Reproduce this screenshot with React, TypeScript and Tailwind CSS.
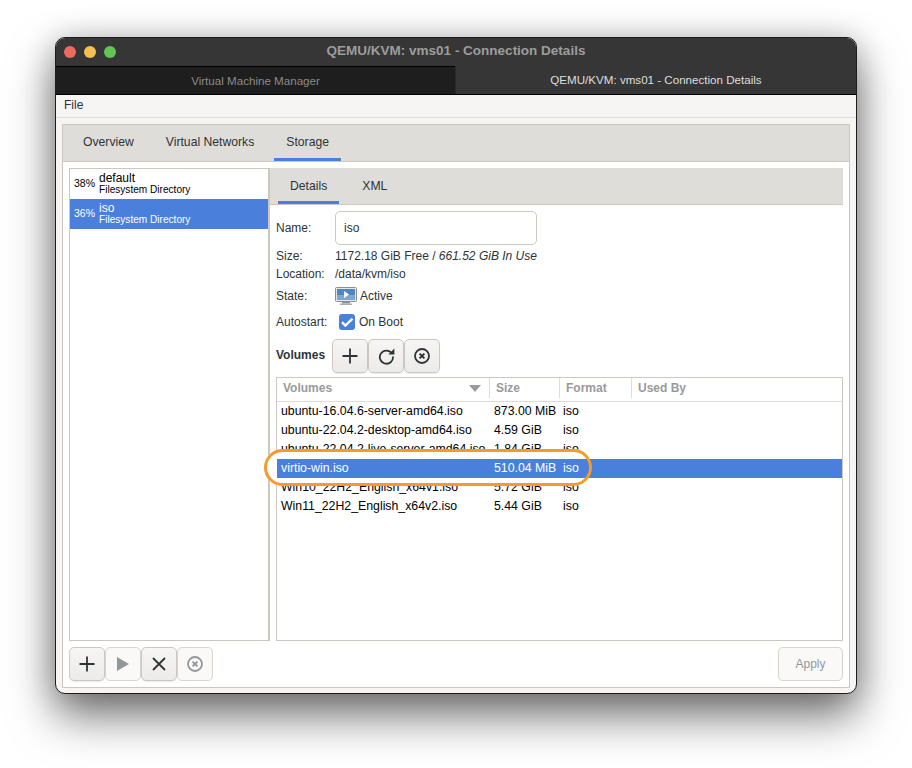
import React from "react";

const volumes = [
  { name: "ubuntu-16.04.6-server-amd64.iso", size: "873.00 MiB", format: "iso" },
  { name: "ubuntu-22.04.2-desktop-amd64.iso", size: "4.59 GiB", format: "iso" },
  { name: "ubuntu-22.04.2-live-server-amd64.iso", size: "1.84 GiB", format: "iso" },
  { name: "virtio-win.iso", size: "510.04 MiB", format: "iso", selected: true },
  { name: "Win10_22H2_English_x64v1.iso", size: "5.72 GiB", format: "iso" },
  { name: "Win11_22H2_English_x64v2.iso", size: "5.44 GiB", format: "iso" },
];

function PlusIcon() {
  return (
    <svg width="16" height="16" viewBox="0 0 16 16" fill="none" stroke="#2e3436" strokeWidth="1.8">
      <path d="M8 0.5v15M0.5 8h15" />
    </svg>
  );
}

function RefreshIcon() {
  return (
    <svg width="17" height="17" viewBox="0 0 17 17" fill="none">
      <path d="M14 5.6A6.6 6.6 0 1 0 15 8.5" stroke="#2e3436" strokeWidth="1.8" />
      <path d="M10.4 6.4h6V0.6z" fill="#2e3436" />
    </svg>
  );
}

function StopIcon({ color = "#2e3436" }: { color?: string }) {
  return (
    <svg width="16" height="16" viewBox="0 0 16 16" fill="none" stroke={color}>
      <circle cx="8" cy="8" r="7" strokeWidth="1.8" />
      <path d="M5.6 5.6l4.8 4.8M10.4 5.6l-4.8 4.8" strokeWidth="2" />
    </svg>
  );
}

function MonitorIcon() {
  return (
    <svg width="22" height="19" viewBox="0 0 22 19">
      <rect x="0.5" y="0.5" width="21" height="14" rx="1" fill="#e4e6e8" stroke="#8b8f92" />
      <rect x="2" y="2" width="18" height="11" fill="#4f86c6" />
      <rect x="2" y="8" width="18" height="5" fill="#7ea6d3" />
      <path d="M9 4l5 3.5-5 3.5z" fill="#ffffff" />
      <rect x="7" y="15" width="8" height="1.5" fill="#8b8f92" />
      <rect x="5" y="16.5" width="12" height="1.5" fill="#a9acae" />
    </svg>
  );
}

function ToolButton({ children, disabled }: { children: React.ReactNode; disabled?: boolean }) {
  return (
    <div
      className={
        disabled
          ? "flex h-[34px] w-[36px] items-center justify-center rounded-[5px] border border-[#d8d4d0] bg-[#faf9f8]"
          : "flex h-[34px] w-[36px] items-center justify-center rounded-[5px] border border-[#cdc7c2] bg-gradient-to-b from-[#f6f5f4] to-[#edebe9] shadow-[0_1px_1px_rgba(0,0,0,0.08)]"
      }
    >
      {children}
    </div>
  );
}

export default function App() {
  return (
    <div className="h-[768px] w-[912px] overflow-hidden bg-white pl-[55px] pt-[37px] font-['Liberation_Sans',Arial,sans-serif] text-[12px] text-[#2e3436]">
      <div className="flex h-[657px] w-[802px] flex-col overflow-hidden rounded-[10px] border border-[#1c1c1c] bg-[#f6f5f4] shadow-[0_22px_45px_rgba(0,0,0,0.55),0_0_30px_rgba(0,0,0,0.18)]">
        {/* Title bar */}
        <div className="relative flex h-[28px] shrink-0 items-center justify-center bg-[#363636] pb-[1px]">
          <div className="absolute left-[8px] top-[8px] flex gap-[8px]">
            <span className="h-[12px] w-[12px] rounded-full bg-[#ed6a5e]" />
            <span className="h-[12px] w-[12px] rounded-full bg-[#f4bf4f]" />
            <span className="h-[12px] w-[12px] rounded-full bg-[#61c554]" />
          </div>
          <span className="text-[13.5px] font-bold text-[#9d9d9d]">QEMU/KVM: vms01 - Connection Details</span>
        </div>

        {/* Window tabs */}
        <div className="flex h-[29px] shrink-0 border-b border-black text-[11.6px]">
          <div className="flex w-[399px] items-center justify-center border-t border-black bg-[#1e1e1e] text-[#8b8b8b]">
            Virtual Machine Manager
          </div>
          <div className="flex flex-1 items-center justify-center border-l border-[#2a2a2a] bg-[#363636] text-[#dedede]">
            QEMU/KVM: vms01 - Connection Details
          </div>
        </div>

        {/* Menu */}
        <div className="flex h-[23px] shrink-0 items-center border-b border-[#dedbd8] pb-[2px] pl-[8px]">File</div>

        {/* Notebook */}
        <div className="m-[6px] flex flex-1 flex-col border border-[#cdc7c2] bg-white">
          <div className="flex h-[37px] shrink-0 gap-[8px] border-b border-[#cdc7c2] bg-[#deddda] pl-[8px] text-[12.2px]">
            <div className="flex items-center px-[12px] pb-[2px]">Overview</div>
            <div className="flex items-center px-[12px] pb-[2px]">Virtual Networks</div>
            <div className="flex items-center border-b-[3px] border-[#4a7fdc] px-[12px] pt-[1px]">Storage</div>
          </div>

          <div className="flex-1 p-[6px]">
            <div className="flex h-[473px]">
              {/* Pool list */}
              <div className="w-[201px] shrink-0 border border-r-2 border-[#cdc7c2] bg-white text-black">
                <div className="flex h-[30px] items-center">
                  <span className="w-[29px] pl-[4px] text-[10.5px]">38%</span>
                  <div className="leading-[11px]">
                    <div className="text-[12px]">default</div>
                    <div className="text-[10.1px]">Filesystem Directory</div>
                  </div>
                </div>
                <div className="flex h-[30px] items-center bg-[#4a7fdc] text-white">
                  <span className="w-[29px] pl-[4px] text-[10.5px]">36%</span>
                  <div className="leading-[11px]">
                    <div className="text-[12px]">iso</div>
                    <div className="text-[10.1px]">Filesystem Directory</div>
                  </div>
                </div>
              </div>

              {/* Details */}
              <div className="flex min-w-0 flex-1 flex-col bg-white">
                <div className="flex h-[37px] shrink-0 gap-[11px] border-b border-[#cdc7c2] bg-[#deddda] pl-[8px] text-[12.2px]">
                  <div className="flex items-center border-b-[3px] border-[#4a7fdc] px-[12px] pt-[3px]">Details</div>
                  <div className="flex items-center px-[12px]">XML</div>
                </div>

                <div className="flex flex-1 flex-col pl-[6px]">
                  <div className="mt-[6px] flex h-[34px] items-center">
                    <span className="w-[59px] pb-[1px]">Name:</span>
                    <div className="flex h-[34px] w-[202px] items-center rounded-[5px] border border-[#cdc7c2] bg-white pl-[8px]">iso</div>
                  </div>
                  <div className="mt-[2px] flex h-[18px] items-center">
                    <span className="w-[59px]">Size:</span>
                    <span>1172.18 GiB Free / <i>661.52 GiB In Use</i></span>
                  </div>
                  <div className="flex h-[18px] items-center">
                    <span className="w-[59px]">Location:</span>
                    <span>/data/kvm/iso</span>
                  </div>
                  <div className="mt-[2px] flex h-[22px] items-center">
                    <span className="w-[59px]">State:</span>
                    <MonitorIcon />
                    <span className="ml-[3px]">Active</span>
                  </div>
                  <div className="mt-[4px] flex h-[22px] items-center">
                    <span className="w-[63px]">Autostart:</span>
                    <span className="flex h-[16px] w-[16px] items-center justify-center rounded-[3px] bg-[#4a7fdc]">
                      <svg width="14" height="12" viewBox="0 0 14 12" fill="none" stroke="#fff" strokeWidth="2.4">
                        <path d="M2 6.2l3.4 3.4L12.5 2.6" />
                      </svg>
                    </span>
                    <span className="ml-[4px]">On Boot</span>
                  </div>
                  <div className="mt-[6px] flex h-[34px] items-center">
                    <span className="w-[56px] pb-[2px] font-bold">Volumes</span>
                    <ToolButton><PlusIcon /></ToolButton>
                    <ToolButton><RefreshIcon /></ToolButton>
                    <ToolButton><StopIcon /></ToolButton>
                  </div>

                  {/* Volume table */}
                  <div className="relative mt-[4px] flex-1 border border-[#cdc7c2] bg-white text-[12.3px] text-black">
                    <div className="flex h-[24px] border-b border-[#dedbd8] pb-[3px] text-[12px] font-bold text-[#9a9a9a]">
                      <div className="flex w-[213px] items-center justify-between border-r border-[#dedbd8] pl-[6px] pr-[8px]">
                        Volumes
                        <svg width="12" height="7" viewBox="0 0 12 7"><path d="M0 0h12L6 7z" fill="#9a9a9a" /></svg>
                      </div>
                      <div className="flex w-[70px] items-center border-r border-[#dedbd8] pl-[6px]">Size</div>
                      <div className="flex w-[72px] items-center border-r border-[#dedbd8] pl-[6px]">Format</div>
                      <div className="flex items-center pl-[6px]">Used By</div>
                    </div>
                    {volumes.map((v) => (
                      <div
                        key={v.name}
                        className={
                          v.selected
                            ? "relative z-20 flex h-[19px] items-center bg-[#4a7fdc] text-white"
                            : "flex h-[19px] items-center"
                        }
                      >
                        <span className="w-[213px] shrink-0 overflow-hidden whitespace-nowrap pl-[4px]">{v.name}</span>
                        <span className="w-[69px] shrink-0 pl-[4px]">{v.size}</span>
                        <span className="pl-[4px]">{v.format}</span>
                      </div>
                    ))}
                    {/* Annotation ring: white fill hides neighbouring rows, stroke sits over the selected row */}
                    <div className="absolute left-[-13px] top-[71px] z-10 h-[37px] w-[328px] rounded-full bg-white" />
                    <div className="absolute left-[-13px] top-[71px] z-30 h-[37px] w-[328px] rounded-full border-[3.5px] border-[#f39c2c]" />
                  </div>
                </div>
              </div>
            </div>

            {/* Bottom toolbar */}
            <div className="mt-[6px] flex h-[34px] justify-between">
              <div className="flex">
                <ToolButton><PlusIcon /></ToolButton>
                <ToolButton disabled>
                  <svg width="14" height="16" viewBox="0 0 14 16"><path d="M1 1l12 7-12 7z" fill="#92979a" /></svg>
                </ToolButton>
                <ToolButton>
                  <svg width="14" height="14" viewBox="0 0 14 14" fill="none" stroke="#2e3436" strokeWidth="1.8"><path d="M1 1l12 12M13 1L1 13" /></svg>
                </ToolButton>
                <ToolButton disabled><StopIcon color="#92979a" /></ToolButton>
              </div>
              <div className="flex h-[34px] w-[65px] items-center justify-center rounded-[5px] border border-[#d8d4d0] bg-[#faf9f8] text-[#92979a]">
                Apply
              </div>
            </div>
          </div>
        </div>
      </div>
    </div>
  );
}
